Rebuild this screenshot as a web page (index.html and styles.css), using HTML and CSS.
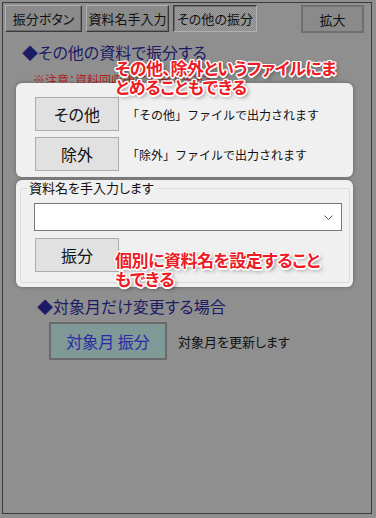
FILE: index.html
```html
<!DOCTYPE html>
<html>
<head>
    <meta charset="utf-8">
    <title>振分</title>
    <link rel="stylesheet" href="styles.css">
</head>
<body>
    <div class="frame">
        <!-- tab buttons -->
        <div class="tabs">
            <button class="tab tab-1">振分ボタン</button>
            <button class="tab tab-2">資料名手入力</button>
            <button class="tab tab-3 pressed">その他の振分</button>
            <button class="zoom-btn">拡大</button>
        </div>

        <p class="section-title">◆その他の資料で振分する</p>
        <p class="note">※注意：資料回収後に振分できます。</p>

        <div class="highlight box-other">
            <div class="row">
                <button class="win-btn">その他</button>
                <span class="row-label">「その他」ファイルで出力されます</span>
            </div>
            <div class="row">
                <button class="win-btn">除外</button>
                <span class="row-label">「除外」ファイルで出力されます</span>
            </div>
        </div>

        <div class="highlight box-name">
            <fieldset class="group">
                <legend>資料名を手入力します</legend>
                <div class="combo">
                    <svg class="chevron" width="9" height="5" viewBox="0 0 9 5">
                        <polyline points="0.5,0.5 4.5,4.5 8.5,0.5" fill="none" stroke="#555" stroke-width="1"/>
                    </svg>
                </div>
                <button class="win-btn split-btn">振分</button>
            </fieldset>
        </div>

        <p class="section-title title-month">◆対象月だけ変更する場合</p>
        <div class="month-row">
            <button class="month-btn">対象月 振分</button>
            <span class="month-label">対象月を更新します</span>
        </div>
    </div>

    <!-- annotation callouts -->
    <div class="callout callout-1">その他、除外というファイルにま<br>とめることもできる</div>
    <div class="callout callout-2">個別に資料名を設定すること<br>もできる</div>
</body>
</html>
```

FILE: styles.css
```css
html, body {
    margin: 0;
    width: 376px;
    height: 518px;
    overflow: hidden;
}

body {
    background: #8f8f8f;
    font-family: "Noto Sans CJK JP", "Noto Sans", sans-serif;
    font-feature-settings: "palt";
    color: #111;
}

button {
    font-family: inherit;
    font-feature-settings: inherit;
    padding: 0;
    margin: 0;
    cursor: pointer;
}

.frame {
    margin: 2px 0 0 2px;
    width: 370px;
    height: 512px;
    border: 1px solid #3c3c3c;
    box-sizing: border-box;
}

/* Tabs row */
.tabs {
    display: flex;
    gap: 4px;
    padding: 2px 0 0 2px;
}

.tab {
    height: 27px;
    box-sizing: border-box;
    font-size: 13px;
    color: #111;
    background: #8b8b8b;
    border: 1px solid;
    border-color: #b0b0b0 #3a3a3a #3a3a3a #b0b0b0;
    box-shadow: inset -1px -1px 0 #6e6e6e;
}
.tab-1 { width: 77px; }
.tab-2 { width: 83px; }
.tab-3 { width: 84px; }

.tab.pressed {
    border-color: #3a3a3a #b0b0b0 #b0b0b0 #3a3a3a;
    box-shadow: inset 1px 1px 0 #6e6e6e;
    background: repeating-conic-gradient(#9c9c9c 0 25%, #8b8b8b 0 50%) 0 0 / 2px 2px;
}

.zoom-btn {
    margin-left: auto;
    margin-right: 7px;
    width: 63px;
    height: 28px;
    box-sizing: border-box;
    font-size: 13px;
    color: #111;
    background: #8a8a8a;
    border: 2px solid #6f6f6f;
}

/* Headings */
.section-title {
    margin: 9px 0 0 19px;
    font-size: 16px;
    line-height: 20px;
    color: #1b1b66;
}

.note {
    margin: 10px 0 0 30px;
    font-size: 12px;
    line-height: 16px;
    color: #b3201e;
}

/* Highlighted (not dimmed) areas */
.highlight {
    position: relative;
    margin-left: 13px;
    width: 337px;
    box-sizing: border-box;
    background: #f0f0f0;
    border-radius: 6px;
    box-shadow: 0 0 4px rgba(0, 0, 0, 0.3);
}

.box-other {
    margin-top: -5px;
    height: 94px;
    padding: 14px 0 0 19px;
    display: flex;
    flex-direction: column;
    gap: 6px;
}

.row {
    display: flex;
    align-items: center;
    gap: 8px;
}

.win-btn {
    width: 84px;
    height: 34px;
    box-sizing: border-box;
    font-size: 16px;
    color: #111;
    background: #e1e1e1;
    border: 1px solid #adadad;
}

.row-label {
    font-size: 12px;
    font-feature-settings: normal;
    color: #111;
}

.box-name {
    margin-top: 3px;
    height: 107px;
    padding: 0 3px 0 4px;
}

.group {
    margin: 0;
    padding: 7px 7px 10px 13px;
    border: 1px solid #dadada;
    border-radius: 3px;
    min-width: 0;
}

.group legend {
    margin-left: -7px;
    padding: 0 2px;
    font-size: 13px;
    line-height: 16px;
    color: #111;
}

.combo {
    height: 28px;
    box-sizing: border-box;
    background: #fff;
    border: 1px solid #7a7a7a;
    display: flex;
    align-items: center;
    justify-content: flex-end;
    padding-right: 8px;
}

.split-btn {
    margin: 7px 0 0 1px;
    display: block;
}

/* Month section */
.title-month {
    margin: 9px 0 0 34px;
}

.month-row {
    display: flex;
    align-items: center;
    gap: 11px;
    margin: 6px 0 0 46px;
}

.month-btn {
    width: 118px;
    height: 38px;
    box-sizing: border-box;
    font-size: 16px;
    color: #2a2aa6;
    background: #7f9997;
    border: 2px solid #6a6a6a;
}

.month-label {
    font-size: 13px;
    color: #111;
}

/* Callouts drawn over the screenshot */
.callout {
    position: absolute;
    left: 115px;
    font-size: 17px;
    line-height: 19px;
    font-weight: 700;
    letter-spacing: -0.5px;
    color: #ee1c24;
    white-space: nowrap;
    text-shadow:
        1.5px 0 #fff, -1.5px 0 #fff, 0 1.5px #fff, 0 -1.5px #fff,
        1px 1px #fff, -1px -1px #fff, 1px -1px #fff, -1px 1px #fff,
        2px 2px 4px rgba(0, 0, 0, 0.55);
}

.callout-1 { top: 58px; }
.callout-2 { top: 250px; }
```
